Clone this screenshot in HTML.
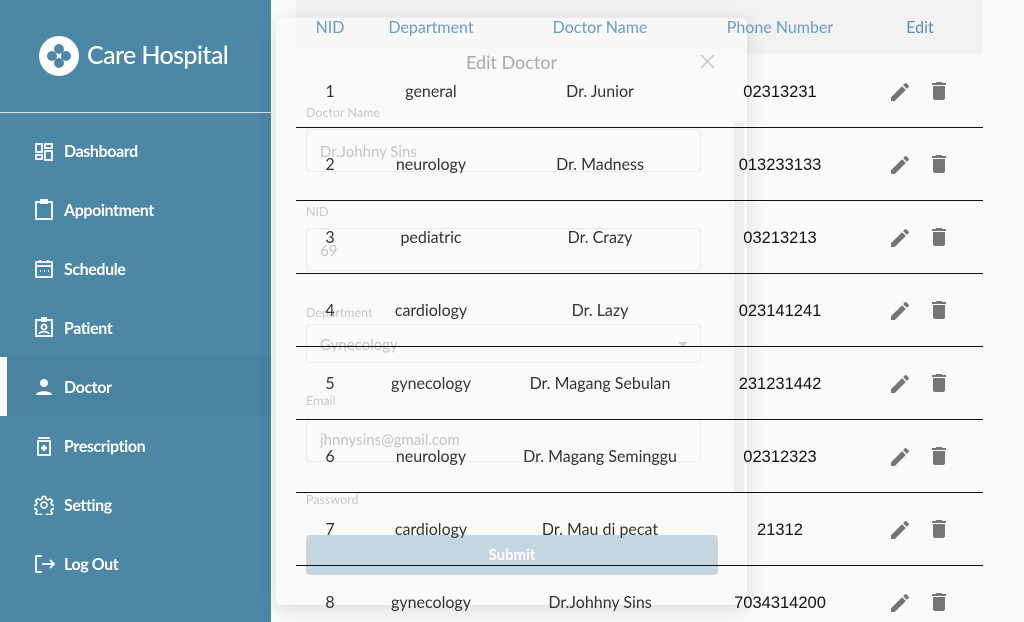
<!DOCTYPE html>
<html><head><style>
*{margin:0;padding:0;box-sizing:border-box}
body{width:1024px;height:622px;overflow:hidden;background:#fafafa;font-family:"Lato","Liberation Sans",sans-serif;position:relative}
.sb{position:absolute;left:0;top:0;width:271px;height:622px;background:#4d87a6}
.abs{position:absolute}
.nav{position:absolute;left:64px;color:#fff;font-weight:bold;font-size:16px;letter-spacing:-0.4px}
.ic{position:absolute;left:34px}
.t{position:absolute;font-size:16px;color:#333;transform:translateX(-50%);white-space:nowrap}
.h{position:absolute;font-size:16px;color:#6a9dbd;transform:translateX(-50%);white-space:nowrap;top:18px}
.ph{font-family:"Liberation Sans",sans-serif;color:#111;font-size:16.5px;margin-top:1px}
.ln{position:absolute;left:296px;width:687px;height:1px;background:#111}
.lbl{position:absolute;left:306px;font-size:12.5px;color:#c8c8c8}
.inp{position:absolute;left:306px;width:395px;height:43px;border:1px solid #ececec;border-radius:4px}
.val{position:absolute;left:320px;font-size:15px;color:#c4c4c4}
</style></head><body>
<div class="sb">
 <svg class="abs" style="left:39px;top:36px" width="40" height="40" viewBox="0 0 40 40"><circle cx="20" cy="20" r="20" fill="#fff"/><g fill="#4d87a6"><circle cx="20" cy="13" r="5"/><circle cx="20" cy="27" r="5"/><circle cx="13" cy="20" r="5"/><circle cx="27" cy="20" r="5"/></g></svg>
 <div class="abs" style="left:87px;top:40px;color:#fff;font-size:25px;letter-spacing:-0.6px;font-weight:500">Care Hospital</div>
 <div class="abs" style="left:0;top:112px;width:271px;height:1px;background:#d8dfe3"></div>
 <div class="abs" style="left:0;top:357px;width:271px;height:59px;background:#4a82a2"></div>
 <div class="abs" style="left:0;top:357px;width:7px;height:59px;background:#fff"></div>
 <svg class="ic" style="top:142px" width="20" height="20" viewBox="0 0 20 20" fill="none" stroke="#fff" stroke-width="1.8"><rect x="2" y="2" width="6" height="8"/><rect x="11" y="2" width="7" height="4"/><rect x="2" y="13" width="6" height="4"/><rect x="11" y="9" width="7" height="9"/></svg>
 <div class="nav" style="top:142px">Dashboard</div>
 <svg class="ic" style="top:199px" width="20" height="22" viewBox="0 0 20 22" fill="none" stroke="#fff" stroke-width="1.8"><rect x="2" y="3" width="16" height="17"/><rect x="7" y="1" width="6" height="3" fill="#fff"/></svg>
 <div class="nav" style="top:201px">Appointment</div>
 <svg class="ic" style="top:259px" width="20" height="20" viewBox="0 0 20 20" fill="none" stroke="#fff" stroke-width="1.8"><rect x="2" y="3" width="16" height="15"/><line x1="2" y1="7" x2="18" y2="7"/><line x1="6" y1="1" x2="6" y2="4"/><line x1="14" y1="1" x2="14" y2="4"/><path d="M6 12h1M10 12h1M14 12h1"/></svg>
 <div class="nav" style="top:260px">Schedule</div>
 <svg class="ic" style="top:317px" width="20" height="20" viewBox="0 0 20 20" fill="none" stroke="#fff" stroke-width="1.8"><rect x="2" y="3" width="16" height="16"/><rect x="8" y="1" width="4" height="3" fill="#fff"/><circle cx="10" cy="10" r="2.5"/><path d="M5 17c1-3 9-3 10 0"/></svg>
 <div class="nav" style="top:319px">Patient</div>
 <svg class="ic" style="top:378px" width="20" height="18" viewBox="0 0 20 18" fill="#fff"><circle cx="10" cy="5" r="4"/><path d="M2 17c0-5 16-5 16 0z"/></svg>
 <div class="nav" style="top:378px">Doctor</div>
 <svg class="ic" style="top:436px" width="20" height="20" viewBox="0 0 20 20" fill="none" stroke="#fff" stroke-width="1.8"><line x1="4" y1="2" x2="16" y2="2"/><rect x="4" y="5" width="12" height="14"/><path d="M10 9v6M7 12h6" stroke-width="2.4"/></svg>
 <div class="nav" style="top:437px">Prescription</div>
 <svg class="ic" style="top:495px" width="20" height="20" viewBox="0 0 20 20" fill="none" stroke="#fff" stroke-width="1.6"><circle cx="10" cy="10" r="3"/><path d="M8.5 1.5h3l.5 2.5 2 1 2.3-1.3 2 2-1.3 2.3 1 2 2.5.5v3l-2.5.5-1 2 1.3 2.3-2 2-2.3-1.3-2 1-.5 2.5h-3l-.5-2.5-2-1-2.3 1.3-2-2 1.3-2.3-1-2-2.5-.5v-3l2.5-.5 1-2-1.3-2.3 2-2 2.3 1.3 2-1z"/></svg>
 <div class="nav" style="top:496px">Setting</div>
 <svg class="ic" style="top:554px" width="22" height="20" viewBox="0 0 22 20" fill="none" stroke="#fff" stroke-width="1.8"><path d="M8 2H2v16h6"/><path d="M8 10h12M16 6l4 4-4 4"/></svg>
 <div class="nav" style="top:555px">Log Out</div>
</div>
<div class="abs" style="left:296px;top:0;width:687px;height:54px;background:#f2f2f2"></div>
<div class="abs" style="left:276px;top:18px;width:471px;height:587px;background:rgba(250,250,250,0.72);border-radius:6px;box-shadow:0 4px 20px rgba(0,0,0,0.12)"></div>
<div class="h" style="left:330px">NID</div>
<div class="h" style="left:431px">Department</div>
<div class="h" style="left:600px">Doctor Name</div>
<div class="h" style="left:780px">Phone Number</div>
<div class="h" style="left:920px;color:#5b8fb1">Edit</div>
<div class="abs" style="left:734px;top:122px;width:10px;height:370px;background:#eeeeee"></div>
<div class="abs" style="left:466px;top:51px;font-size:18px;color:#aaa">Edit Doctor</div>
<svg class="abs" style="left:700px;top:54px" width="15" height="15" viewBox="0 0 15 15" stroke="#c4c4c4" stroke-width="1.5"><path d="M1 1l13 13M14 1L1 14"/></svg>
<div class="lbl" style="top:105px">Doctor Name</div>
<div class="inp" style="top:129px"></div>
<div class="val" style="top:143px">Dr.Johhny Sins</div>
<div class="lbl" style="top:204px">NID</div>
<div class="inp" style="top:228px"></div>
<div class="val" style="top:242px">69</div>
<div class="lbl" style="top:305px">Department</div>
<div class="inp" style="top:324px;height:39px"></div>
<div class="val" style="top:336px">Gynecology</div>
<div class="abs" style="left:678px;top:342px;border:5px solid transparent;border-top-color:#d0d0d0"></div>
<div class="lbl" style="top:393px">Email</div>
<div class="inp" style="top:419px"></div>
<div class="val" style="top:431px">jhnnysins@gmail.com</div>
<div class="lbl" style="top:492px">Password</div>
<div class="abs" style="left:306px;top:535px;width:412px;height:40px;background:#c5d6e0;border-radius:4px;color:#fff;font-weight:bold;font-size:15px;text-align:center;line-height:40px">Submit</div>
<div id="rows"></div>
<script>
var d=[["1","general","Dr. Junior","02313231"],["2","neurology","Dr. Madness","013233133"],["3","pediatric","Dr. Crazy","03213213"],["4","cardiology","Dr. Lazy","023141241"],["5","gynecology","Dr. Magang Sebulan","231231442"],["6","neurology","Dr. Magang Seminggu","02312323"],["7","cardiology","Dr. Mau di pecat","21312"],["8","gynecology","Dr.Johhny Sins","7034314200"]];
var h="";
d.forEach(function(r,i){var y=82+i*73;
h+='<div class="t" style="left:330px;top:'+y+'px">'+r[0]+'</div><div class="t" style="left:431px;top:'+y+'px">'+r[1]+'</div><div class="t" style="left:600px;top:'+y+'px">'+r[2]+'</div><div class="t ph" style="left:780px;top:'+y+'px">'+r[3]+'</div>';
h+='<svg class="abs" style="left:888px;top:'+(y-2)+'px" width="24" height="24" viewBox="0 0 24 24" fill="#757575"><path d="M3 17.25V21h3.75L17.81 9.94l-3.75-3.75L3 17.25zM20.71 7.04a1 1 0 000-1.41l-2.34-2.34a1 1 0 00-1.41 0l-1.83 1.83 3.75 3.75 1.83-1.83z"/></svg>';
h+='<svg class="abs" style="left:927px;top:'+(y-3)+'px" width="24" height="24" viewBox="0 0 24 24" fill="#757575"><path d="M6 19c0 1.1.9 2 2 2h8c1.1 0 2-.9 2-2V7H6v12zM19 4h-3.5l-1-1h-5l-1 1H5v2h14V4z"/></svg>';
if(i<7)h+='<div class="ln" style="top:'+(127+i*73)+'px"></div>';
});
document.getElementById("rows").innerHTML=h;
</script>
</body></html>
